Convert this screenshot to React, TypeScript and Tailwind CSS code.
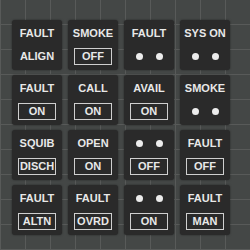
type Part = { kind: "text" | "box" | "dots"; label?: string };

type Cell = { top: Part; bottom: Part };

const t = (label: string): Part => ({ kind: "text", label });
const b = (label: string): Part => ({ kind: "box", label });
const dots: Part = { kind: "dots" };

const CELLS: Cell[] = [
  { top: t("FAULT"), bottom: t("ALIGN") },
  { top: t("SMOKE"), bottom: b("OFF") },
  { top: t("FAULT"), bottom: dots },
  { top: t("SYS ON"), bottom: dots },
  { top: t("FAULT"), bottom: b("ON") },
  { top: t("CALL"), bottom: b("ON") },
  { top: t("AVAIL"), bottom: b("ON") },
  { top: t("SMOKE"), bottom: dots },
  { top: t("SQUIB"), bottom: b("DISCH") },
  { top: t("OPEN"), bottom: b("ON") },
  { top: dots, bottom: b("OFF") },
  { top: t("FAULT"), bottom: b("OFF") },
  { top: t("FAULT"), bottom: b("ALTN") },
  { top: t("FAULT"), bottom: b("OVRD") },
  { top: dots, bottom: b("ON") },
  { top: t("FAULT"), bottom: b("MAN") },
];

const Slot = ({ part }: { part: Part }) => {
  if (part.kind === "dots") {
    return (
      <div className="flex h-[17px] items-center justify-center gap-[13px]">
        <span className="block h-[7px] w-[7px] rounded-full bg-[#ececec]" />
        <span className="block h-[7px] w-[7px] rounded-full bg-[#ececec]" />
      </div>
    );
  }
  if (part.kind === "box") {
    return (
      <div className="flex h-[17px] w-[38px] items-center justify-center border-[1.5px] border-[#cfcfcf] leading-none">
        {part.label}
      </div>
    );
  }
  return <div className="flex h-[17px] items-center justify-center leading-none">{part.label}</div>;
};

export default function App() {
  return (
    <div
      className="h-[250px] w-[250px] overflow-hidden bg-[#444746] bg-[linear-gradient(to_right,#585a59_1px,transparent_1px),linear-gradient(to_bottom,#585a59_1px,transparent_1px)] bg-[size:25px_25px] bg-[position:0_-1px] pl-[12px] pt-[20px]"
      style={{ fontFamily: '"Liberation Sans", Arial, sans-serif' }}
    >
      <div className="grid grid-cols-[repeat(4,50px)] gap-x-[6px] gap-y-[5px]">
        {CELLS.map((cell, i) => (
          <div
            key={i}
            className="flex h-[50px] w-[50px] flex-col items-center gap-[6px] rounded-[3px] bg-[#2a2a2a] pt-[5px] text-[11px] font-bold text-[#e8e8e8] shadow-[0_0_2px_rgba(0,0,0,0.5)]"
          >
            <Slot part={cell.top} />
            <Slot part={cell.bottom} />
          </div>
        ))}
      </div>
    </div>
  );
}
